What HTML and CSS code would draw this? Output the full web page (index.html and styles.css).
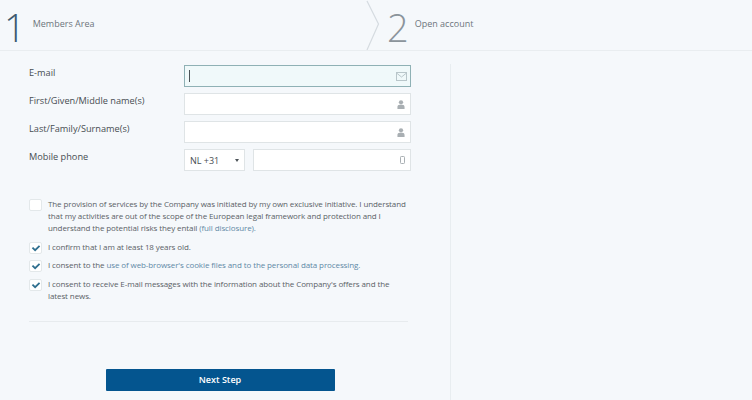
FILE: index.html
```html
<!DOCTYPE html>
<html lang="en">
<head>
<meta charset="utf-8">
<title>Open account</title>
<link rel="stylesheet" href="styles.css">
</head>
<body>
<header class="steps">
  <div class="step step-one">
    <span class="num num-active">1</span>
    <span class="step-label">Members Area</span>
  </div>
  <svg class="chevron" width="14" height="50" viewBox="0 0 14 50"><path d="M1 1 L12.500 24 L1 50" fill="none" stroke="#d5dbe0" stroke-width="1.200"/></svg>
  <div class="step">
    <span class="num">2</span>
    <span class="step-label">Open account</span>
  </div>
</header>
<main class="content">
  <form class="form">
    <div class="fields">
      <div class="row">
        <label class="label">E-mail</label>
        <div class="input input-focus">
          <span class="caret"></span>
          <svg class="icon" width="11" height="9" viewBox="0 0 11 9"><rect x="0.500" y="0.500" width="10" height="8" fill="none" stroke="#b9c6ca"/><path d="M0.500 1 L5.500 5 L10.500 1" fill="none" stroke="#b9c6ca"/></svg>
        </div>
      </div>
      <div class="row">
        <label class="label">First/Given/Middle name(s)</label>
        <div class="input">
          <svg class="icon" width="8" height="9" viewBox="0 0 9 10"><circle cx="4.500" cy="2.600" r="2.400" fill="#a9afb3"/><path d="M0.500 10 V7.500 Q0.500 5.500 3 5.300 H6 Q8.500 5.500 8.500 7.500 V10 Z" fill="#a9afb3"/></svg>
        </div>
      </div>
      <div class="row">
        <label class="label">Last/Family/Surname(s)</label>
        <div class="input">
          <svg class="icon" width="8" height="9" viewBox="0 0 9 10"><circle cx="4.500" cy="2.600" r="2.400" fill="#a9afb3"/><path d="M0.500 10 V7.500 Q0.500 5.500 3 5.300 H6 Q8.500 5.500 8.500 7.500 V10 Z" fill="#a9afb3"/></svg>
        </div>
      </div>
      <div class="row">
        <label class="label">Mobile phone</label>
        <div class="phone">
          <div class="input select">
            <span class="select-value">NL +31</span>
            <span class="arrow"></span>
          </div>
          <div class="input phone-number">
            <svg class="icon" width="5" height="8" viewBox="0 0 5 8"><rect x="0.500" y="0.500" width="4" height="7" rx="0.800" fill="none" stroke="#a9afb3"/></svg>
          </div>
        </div>
      </div>
    </div>
    <div class="checks">
      <div class="check-row">
        <span class="box"></span>
        <p class="check-text">The provision of services by the Company was initiated by my own exclusive initiative. I understand that my activities are out of the scope of the European legal framework and protection and I understand the potential risks they entail <a class="link" href="#">(full disclosure).</a></p>
      </div>
      <div class="check-row">
        <span class="box"><svg width="10" height="8" viewBox="0 0 11 9"><path d="M1.500 4 L4.500 7 L9.500 2" fill="none" stroke="#2f6f8f" stroke-width="2"/></svg></span>
        <p class="check-text">I confirm that I am at least 18 years old.</p>
      </div>
      <div class="check-row">
        <span class="box"><svg width="10" height="8" viewBox="0 0 11 9"><path d="M1.500 4 L4.500 7 L9.500 2" fill="none" stroke="#2f6f8f" stroke-width="2"/></svg></span>
        <p class="check-text">I consent to the <a class="link" href="#">use of web-browser's cookie files and to the personal data processing.</a></p>
      </div>
      <div class="check-row">
        <span class="box"><svg width="10" height="8" viewBox="0 0 11 9"><path d="M1.500 4 L4.500 7 L9.500 2" fill="none" stroke="#2f6f8f" stroke-width="2"/></svg></span>
        <p class="check-text">I consent to receive E-mail messages with the information about the Company's offers and the latest news.</p>
      </div>
    </div>
    <div class="divider"></div>
    <div class="actions">
      <button class="next" type="button">Next Step</button>
    </div>
  </form>
  <aside class="side"></aside>
</main>
</body>
</html>
```

FILE: styles.css
```css
* { box-sizing: border-box; }
html, body { margin: 0; padding: 0; }
body {
  width: 752px;
  height: 400px;
  overflow: hidden;
  background: #f5f8fb;
  font-family: "Open Sans", "Liberation Sans", sans-serif;
  color: #4c5358;
}
.steps {
  display: flex;
  align-items: stretch;
  height: 51px;
  border-bottom: 1px solid #e9edf0;
}
.step {
  display: flex;
  align-items: center;
  height: 50px;
}
.step-one {
  width: 366px;
  padding-left: 4px;
}
.num {
  font-family: "Open Sans", sans-serif;
  font-weight: 300;
  font-size: 38px;
  line-height: 50px;
  color: #8b949b;
  margin-left: 7px;
  margin-top: 4px;
}
.num-active {
  color: #3c5a70;
  margin-left: 0;
}
.step-label {
  font-size: 9px;
  line-height: 12px;
  color: #6d757b;
  margin-left: 6px;
  margin-top: -3px;
}
.step-one .step-label { margin-left: 7px; }
.chevron { flex: none; }
.content {
  display: flex;
  align-items: flex-start;
  padding-top: 13px;
}
.form {
  width: 451px;
  height: 336px;
  padding: 1px 39px 0 29px;
  border-right: 1px solid #e8edf0;
}
.fields {
  display: flex;
  flex-direction: column;
  gap: 6px;
}
.row {
  display: flex;
  height: 22px;
}
.label {
  width: 155px;
  font-size: 9.200px;
  line-height: 13px;
  color: #474d52;
  margin-top: 1px;
}
.input {
  flex: 1;
  display: flex;
  align-items: center;
  justify-content: flex-end;
  height: 22px;
  padding: 0 5px;
  background: #fff;
  border: 1px solid #dfe4e6;
}
.input-focus {
  justify-content: space-between;
  background: #f0f9fa;
  border-color: #8fb1b5;
  padding-left: 4px;
  padding-right: 3px;
}
.caret {
  width: 1px;
  height: 12px;
  background: #4c5358;
}
.icon { flex: none; }
.phone {
  flex: 1;
  display: flex;
  gap: 8px;
}
.select {
  flex: none;
  width: 61px;
  justify-content: space-between;
  padding: 0 1px 0 5px;
}
.select-value {
  font-size: 9px;
  color: #474d52;
}
.arrow {
  width: 0;
  height: 0;
  margin-right: 4px;
  border-left: 2.500px solid transparent;
  border-right: 2.500px solid transparent;
  border-top: 3px solid #4c5358;
}
.checks {
  display: flex;
  flex-direction: column;
  gap: 6.500px;
  margin-top: 27px;
}
.check-row {
  display: flex;
  gap: 6px;
}
.box {
  flex: none;
  display: flex;
  align-items: center;
  justify-content: center;
  width: 13px;
  height: 12px;
  margin: 1px 0 -1px;
  background: #fff;
  border: 1px solid #e3e8ea;
  border-radius: 2px;
}
.check-text {
  margin: 0;
  width: 360px;
  font-size: 8px;
  letter-spacing: -0.100px;
  line-height: 12px;
  color: #5a6166;
}
.link {
  color: #5f89a6;
  text-decoration: none;
}
.divider {
  height: 1px;
  margin: 19px 3px 0 0;
  background: #e7ebee;
}
.actions {
  display: flex;
  justify-content: center;
  margin-top: 47px;
}
.next {
  width: 229px;
  height: 22px;
  padding: 0;
  background: #04558f;
  border: 0;
  border-radius: 1px;
  color: #fff;
  font-family: "Open Sans", sans-serif;
  font-size: 9px;
  font-weight: 600;
}
.side { flex: 1; }
```
